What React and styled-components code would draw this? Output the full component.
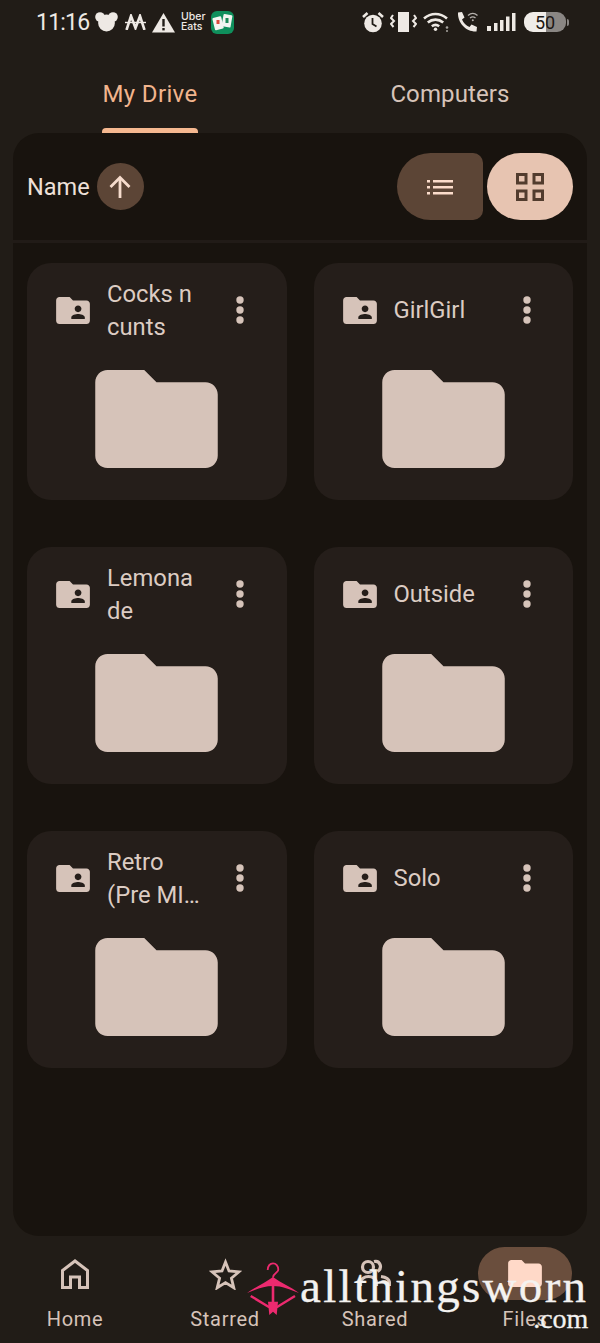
import React from 'react';
import styled, { createGlobalStyle } from 'styled-components';

const Global = createGlobalStyle`
  html, body { margin: 0; padding: 0; background: #211c17; }
  * { box-sizing: border-box; }
`;

const Screen = styled.div`
  position: relative;
  width: 600px;
  height: 1343px;
  overflow: hidden;
  display: flex;
  flex-direction: column;
  background: #211c17;
  font-family: Roboto, "Noto Sans", sans-serif;
`;

const StatusBar = styled.div`
  height: 44px;
  flex: none;
  display: flex;
  justify-content: space-between;
  align-items: center;
  padding: 0 34px 0 36px;
  color: #eee9e4;
`;
const StatusGroup = styled.div`
  display: flex;
  align-items: center;
  gap: 6px;
`;
const Clock = styled.span`
  font-size: 23px;
  width: 53px;
  letter-spacing: -0.8px;
`;
const UberEats = styled.span`
  width: 24px;
  font-size: 10.5px;
  line-height: 10.5px;
  font-weight: 500;
  font-family: "Inter", Roboto, sans-serif;
`;
const Battery = styled.div`
  width: 42px;
  height: 20px;
  display: flex;
  align-items: center;
  justify-content: center;
  margin-left: 2px;
  border-radius: 9px;
  background: linear-gradient(90deg, #f0ece8 0 52%, #8a8683 52% 100%);
  color: #1c1713;
  font-size: 18px;
  position: relative;
  &::after {
    content: '';
    position: absolute;
    right: -3px;
    top: 7px;
    width: 2px;
    height: 7px;
    border-radius: 0 2px 2px 0;
    background: #8a8683;
  }
`;

const Tabs = styled.div`
  height: 89px;
  flex: none;
  display: flex;
`;
const Tab = styled.div`
  flex: 1;
  display: flex;
  flex-direction: column;
  align-items: center;
  justify-content: flex-end;
`;
const TabLabel = styled.div`
  font-size: 24px;
  line-height: 32px;
  letter-spacing: ${p => (p.$active ? '0.35px' : '0.12px')};
  color: ${p => (p.$active ? '#f2b48d' : '#d6c3b9')};
  margin-bottom: ${p => (p.$active ? '18px' : '23px')};
`;
const TabMark = styled.div`
  width: 96px;
  height: 5px;
  border-radius: 4px 4px 0 0;
  background: #f5b890;
`;

const Panel = styled.div`
  flex: 1;
  margin: 0 13px;
  background: #18130e;
  border-radius: 26px;
  display: flex;
  flex-direction: column;
  min-height: 0;
`;
const Toolbar = styled.div`
  height: 107px;
  flex: none;
  display: flex;
  align-items: center;
  justify-content: space-between;
  padding: 0 14px;
`;
const SortBy = styled.div`
  display: flex;
  align-items: center;
  gap: 7px;
`;
const SortName = styled.span`
  font-size: 23.5px;
  color: #eee0d8;
`;
const SortButton = styled.div`
  width: 47px;
  height: 47px;
  border-radius: 50%;
  background: #5c4536;
  display: flex;
  align-items: center;
  justify-content: center;
`;
const Toggle = styled.div`
  display: flex;
  gap: 4px;
`;
const ToggleButton = styled.div`
  width: 86px;
  height: 67px;
  display: flex;
  align-items: center;
  justify-content: center;
  background: ${p => (p.$on ? '#e7c4b1' : '#5c4536')};
  border-radius: ${p => (p.$on ? '34px' : '34px 10px 10px 34px')};
`;
const Divider = styled.div`
  height: 3px;
  flex: none;
  background: #211b17;
`;
const Grid = styled.div`
  display: grid;
  grid-template-columns: 259.5px 259.5px;
  grid-auto-rows: 237px;
  column-gap: 27px;
  row-gap: 47px;
  padding: 20px 14px 0;
`;
const Card = styled.div`
  background: #251e1a;
  border-radius: 24px;
  padding-top: 14px;
  display: flex;
  flex-direction: column;
  align-items: center;
`;
const CardHead = styled.div`
  width: 100%;
  height: 66px;
  flex: none;
  display: flex;
  align-items: center;
  padding-left: 29px;
`;
const CardTitle = styled.div`
  width: 96px;
  margin-left: 17px;
  padding-top: 1px;
  font-size: 23.8px;
  line-height: 33px;
  color: #dcccc3;
  overflow-wrap: anywhere;
`;
const CardPreview = styled.div`
  margin-top: 27px;
  display: flex;
`;
const MoreIcon = styled.svg`
  margin-left: 33px;
  flex: none;
`;

const Nav = styled.div`
  height: 107px;
  flex: none;
  display: grid;
  grid-template-columns: repeat(4, 1fr);
  padding-top: 11px;
`;
const NavItem = styled.div`
  display: flex;
  flex-direction: column;
  align-items: center;
`;
const NavPill = styled.div`
  width: 94px;
  height: 53px;
  border-radius: 27px;
  display: flex;
  align-items: center;
  justify-content: center;
  background: ${p => (p.$active ? '#6a4e3d' : 'transparent')};
`;
const NavLabel = styled.div`
  margin-top: 7px;
  font-size: 20px;
  line-height: 24px;
  letter-spacing: 0.7px;
  color: #d6c3b9;
`;

const Watermark = styled.div`
  position: absolute;
  left: 247px;
  top: 1262px;
  display: flex;
  align-items: flex-start;
  pointer-events: none;
`;
const WatermarkWords = styled.div`
  margin: -3px 0 0 1px;
  display: flex;
  flex-direction: column;
  align-items: flex-end;
  color: #f4f2f0;
  font-family: "Liberation Serif", serif;
  -webkit-text-stroke: 0.3px #f4f2f0;
`;
const WatermarkName = styled.div`
  font-size: 47px;
  line-height: 54px;
  letter-spacing: 2.3px;
`;
const WatermarkCom = styled.div`
  margin-top: -9px;
  font-size: 28px;
  line-height: 30px;
`;

const FOLDER = 'M10 4H4c-1.1 0-2 .9-2 2v12c0 1.1.9 2 2 2h16c1.1 0 2-.9 2-2V8c0-1.1-.9-2-2-2h-8l-2-2z';
const FOLDER_SHARED =
  'M20 6h-8l-2-2H4c-1.1 0-2 .9-2 2v12c0 1.1.9 2 2 2h16c1.1 0 2-.9 2-2V8c0-1.1-.9-2-2-2zm-5 3c1.1 0 2 .9 2 2s-.9 2-2 2-2-.9-2-2 .9-2 2-2zm4 8h-8v-1c0-1.33 2.67-2 4-2s4 .67 4 2v1z';

const Folder = ({ w, h, color = '#d6c3b9' }) => (
  <svg width={w} height={h} viewBox="2 4 20 16">
    <path d={FOLDER} fill={color} />
  </svg>
);

const SharedFolder = () => (
  <svg width="34" height="27" viewBox="2 4 20 16" style={{ flex: 'none' }}>
    <path d={FOLDER_SHARED} fill="#d6c3b9" fillRule="evenodd" />
  </svg>
);

const More = () => (
  <MoreIcon width="8" height="28" viewBox="0 0 8 28">
    <circle cx="4" cy="4" r="3.7" fill="#d6c3b9" />
    <circle cx="4" cy="14" r="3.7" fill="#d6c3b9" />
    <circle cx="4" cy="24" r="3.7" fill="#d6c3b9" />
  </MoreIcon>
);

const MouseIcon = () => (
  <svg width="24" height="20" viewBox="0 0 24 20" fill="#eee9e4">
    <circle cx="5" cy="5" r="4.8" />
    <circle cx="18" cy="5" r="4.8" />
    <circle cx="11.5" cy="11" r="8.4" />
  </svg>
);
const MLogo = () => (
  <svg width="21" height="16" viewBox="0 0 21 16" fill="none" stroke="#eee9e4" strokeWidth="2.6">
    <path d="M1.5 16 6 2l4.5 12L15 2l4.500 14" />
    <path d="M0 8.500h21" strokeWidth="1.400" />
  </svg>
);
const WarnIcon = () => (
  <svg width="23" height="21" viewBox="0 0 23 21">
    <path d="M11.500 1 23 20.500H0z" fill="#eee9e4" />
    <rect x="10.300" y="7" width="2.400" height="7.500" fill="#211c17" />
    <rect x="10.300" y="16" width="2.400" height="2.400" fill="#211c17" />
  </svg>
);
const CardsApp = () => (
  <svg width="23" height="23" viewBox="0 0 23 23">
    <rect width="23" height="23" rx="6" fill="#0f8f5c" />
    <rect x="2.500" y="6" width="9" height="12.500" rx="1" fill="#f3f5f1" transform="rotate(-14 7 12)" />
    <rect x="11.500" y="3.500" width="9" height="12.500" rx="1" fill="#f3f5f1" transform="rotate(10 16 10)" />
    <rect x="5.500" y="9" width="3" height="4" fill="#d9493d" />
    <rect x="14.500" y="7" width="3" height="5" fill="#1d8a58" />
  </svg>
);
const AlarmIcon = () => (
  <svg width="22" height="22" viewBox="0 0 22 22">
    <circle cx="11" cy="12.500" r="8.800" fill="#eee9e4" />
    <path d="M1 6l4.500-4M21 6l-4.500-4" stroke="#eee9e4" strokeWidth="2.600" />
    <path d="M10.500 7v6l4 2.500" stroke="#211c17" strokeWidth="1.800" fill="none" />
  </svg>
);
const VibrateIcon = () => (
  <svg width="27" height="20" viewBox="0 0 27 20" fill="none" stroke="#eee9e4" strokeWidth="2">
    <rect x="8" y="0" width="11" height="20" fill="#eee9e4" stroke="none" />
    <path d="M3 3 1 6l3 3-3 3 2.500 3" />
    <path d="M24 3l2 3-3 3 3 3-2.500 3" />
  </svg>
);
const WifiIcon = () => (
  <svg width="27" height="20" viewBox="0 0 27 20" fill="none" stroke="#eee9e4" strokeWidth="2.600">
    <path d="M1 6.500c7-6 16-6 23 0" />
    <path d="M4.800 10.500c4.500-3.800 10.900-3.800 15.400 0" />
    <path d="M8.800 14.300c2.500-1.800 5-1.800 7.400 0" />
    <circle cx="12.500" cy="17.300" r="1.700" fill="#eee9e4" stroke="none" />
    <circle cx="24" cy="15.500" r="1.300" fill="#a8a4a0" stroke="none" />
    <circle cx="24" cy="19" r="1" fill="#a8a4a0" stroke="none" />
  </svg>
);
const WifiCallIcon = () => (
  <svg width="23" height="22" viewBox="0 0 23 22" fill="none">
    <path d="M2 1.500 6 1l2.500 5.500L6 8.500c1.500 3.500 4 6 7.500 7.500l2-2.500 5.500 2.500-.5 4.500C10 21 1.500 12 2 1.500z" fill="#eee9e4" />
    <path d="M12 4.500c3-2.600 6.500-2.600 9.500 0M14 7c1.800-1.500 3.700-1.500 5.500 0" stroke="#b5b0ac" strokeWidth="1.300" />
    <circle cx="16.800" cy="9.300" r="1" fill="#b5b0ac" />
  </svg>
);
const SignalIcon = () => (
  <svg width="31" height="18" viewBox="0 0 31 18" fill="#eee9e4">
    <rect x="2" y="13" width="4" height="5" />
    <rect x="9" y="10" width="3.500" height="8" />
    <rect x="15" y="7" width="3.500" height="11" />
    <rect x="21" y="3.500" width="3.500" height="14.500" />
    <rect x="27" y="0" width="3.500" height="18" />
  </svg>
);

const ArrowUp = () => (
  <svg width="24" height="24" viewBox="0 0 24 24" fill="none" stroke="#f6dccd" strokeWidth="2.800">
    <path d="M12 23V3" />
    <path d="M2.500 12 12 2.500 21.500 12" />
  </svg>
);
const ListIcon = () => (
  <svg width="26" height="16" viewBox="0 0 26 16" fill="#fbdccb">
    <rect x="0" y="1" width="3" height="2.500" />
    <rect x="0" y="7" width="3" height="2.500" />
    <rect x="0" y="13" width="3" height="2.500" />
    <rect x="6" y="1" width="20" height="2.500" />
    <rect x="6" y="7" width="20" height="2.500" />
    <rect x="6" y="13" width="20" height="2.500" />
  </svg>
);
const GridIcon = () => (
  <svg width="28" height="28" viewBox="0 0 28 28" fill="none" stroke="#523c2e" strokeWidth="3">
    <rect x="1.500" y="1.500" width="8.500" height="8.500" />
    <rect x="18" y="1.500" width="8.500" height="8.500" />
    <rect x="1.500" y="18" width="8.500" height="8.500" />
    <rect x="18" y="18" width="8.500" height="8.500" />
  </svg>
);
const HomeIcon = () => (
  <svg width="28" height="30" viewBox="0 0 28 30" fill="none" stroke="#d6c3b9" strokeWidth="3">
    <path d="M1.500 28.500V11.500L14 2l12.500 9.500v17H18.500V18h-9v10.500z" />
  </svg>
);
const StarIcon = () => (
  <svg width="33" height="32" viewBox="0 0 33 32" fill="none" stroke="#d6c3b9" strokeWidth="2.800">
    <path d="M16.500 4 20 13l10 .8-7.600 6.400 2.400 9.600-8.300-5.200-8.300 5.200 2.400-9.600L3 13.800 13 13z" />
  </svg>
);
const SharedIcon = () => (
  <svg width="32" height="30" viewBox="0 0 32 30" fill="none" stroke="#d6c3b9" strokeWidth="3.200">
    <circle cx="9" cy="8" r="5.500" />
    <path d="M15 2.500c6-1.500 9 6.500 3.500 10" />
    <path d="M1.500 27v-3c0-4 4-6.500 8-6.500s8 2.500 8 6.500v3" />
    <path d="M22 17.500c4 .5 8.500 2.500 8.500 6.500v3" />
  </svg>
);
const Hanger = () => (
  <svg width="52" height="53" viewBox="0 0 52 53" style={{ flex: 'none' }}>
    <path d="M20.700 8C20.700 4 23 1.300 26 1.300S31.300 4 31.300 7.500 26 11 26 15.500" fill="none" stroke="#ec2a6f" strokeWidth="1.800" />
    <path d="M0 31C8 25 18 21 26 15c8 6 18 10 26 16-9-3.500-17-7-26-7S9 27.500 0 31z" fill="#ec2a6f" />
    <path d="M26 21v26" stroke="#ec2a6f" strokeWidth="2.600" />
    <path d="M3.700 34 22.300 45.300M48 34 29.700 45.300" stroke="#ec2a6f" strokeWidth="2.400" />
    <path d="M21 39.700h10L29.700 53 26 49.700 22.300 53z" fill="#ec2a6f" />
  </svg>
);

const folders = [
  { id: 1, name: 'Cocks n cunts' },
  { id: 2, name: 'GirlGirl' },
  { id: 3, name: 'Lemonade' },
  { id: 4, name: 'Outside' },
  { id: 5, name: 'Retro (Pre\u00a0MI\u2026' },
  { id: 6, name: 'Solo' },
];

export default function App() {
  return (
    <Screen>
      <Global />
      <StatusBar>
        <StatusGroup>
          <Clock>11:16</Clock>
          <MouseIcon />
          <MLogo />
          <WarnIcon />
          <UberEats>Uber Eats</UberEats>
          <CardsApp />
        </StatusGroup>
        <StatusGroup>
          <AlarmIcon />
          <VibrateIcon />
          <WifiIcon />
          <WifiCallIcon />
          <SignalIcon />
          <Battery>50</Battery>
        </StatusGroup>
      </StatusBar>

      <Tabs>
        <Tab>
          <TabLabel $active>My Drive</TabLabel>
          <TabMark />
        </Tab>
        <Tab>
          <TabLabel>Computers</TabLabel>
        </Tab>
      </Tabs>

      <Panel>
        <Toolbar>
          <SortBy>
            <SortName>Name</SortName>
            <SortButton>
              <ArrowUp />
            </SortButton>
          </SortBy>
          <Toggle>
            <ToggleButton>
              <ListIcon />
            </ToggleButton>
            <ToggleButton $on>
              <GridIcon />
            </ToggleButton>
          </Toggle>
        </Toolbar>
        <Divider />
        <Grid>
          {folders.map(f => (
            <Card key={f.id}>
              <CardHead>
                <SharedFolder />
                <CardTitle>{f.name}</CardTitle>
                <More />
              </CardHead>
              <CardPreview>
                <Folder w={123} h={98} />
              </CardPreview>
            </Card>
          ))}
        </Grid>
      </Panel>

      <Nav>
        <NavItem>
          <NavPill>
            <HomeIcon />
          </NavPill>
          <NavLabel>Home</NavLabel>
        </NavItem>
        <NavItem>
          <NavPill>
            <StarIcon />
          </NavPill>
          <NavLabel>Starred</NavLabel>
        </NavItem>
        <NavItem>
          <NavPill>
            <SharedIcon />
          </NavPill>
          <NavLabel>Shared</NavLabel>
        </NavItem>
        <NavItem>
          <NavPill $active>
            <Folder w={34} h={27} color="#ffd9c8" />
          </NavPill>
          <NavLabel>Files</NavLabel>
        </NavItem>
      </Nav>

      <Watermark>
        <Hanger />
        <WatermarkWords>
          <WatermarkName>allthingsworn</WatermarkName>
          <WatermarkCom>.com</WatermarkCom>
        </WatermarkWords>
      </Watermark>
    </Screen>
  );
}
